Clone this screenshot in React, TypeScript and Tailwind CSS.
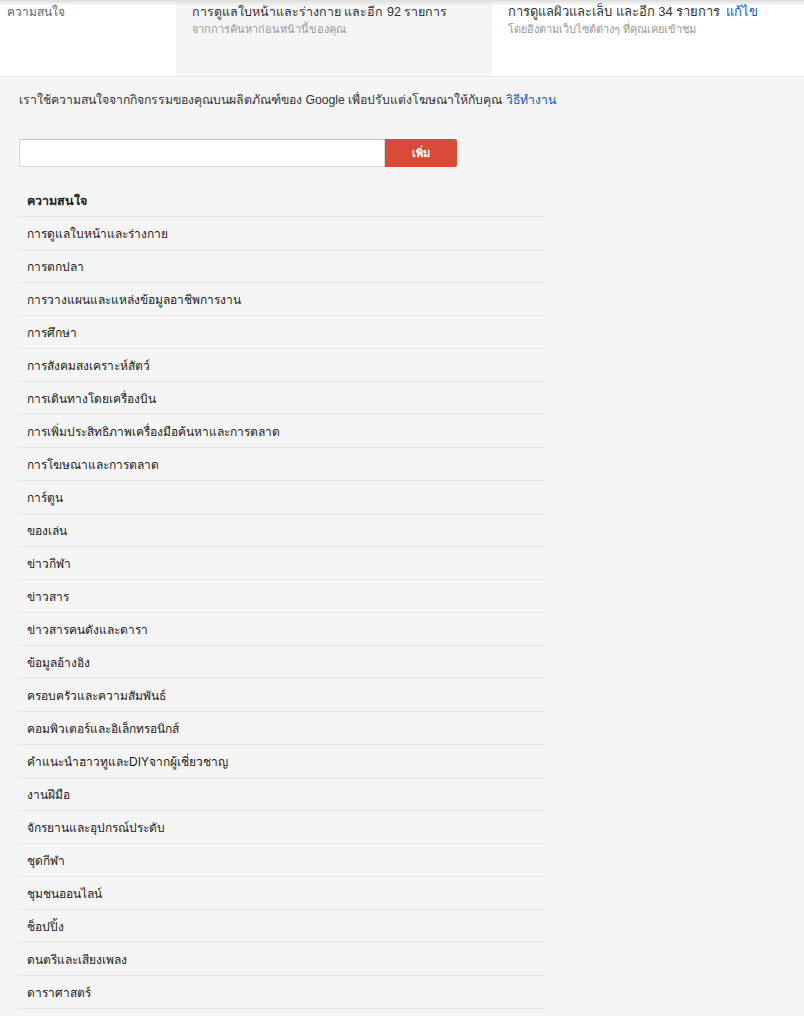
import React from "react";

const interests = [
  "การดูแลใบหน้าและร่างกาย",
  "การตกปลา",
  "การวางแผนและแหล่งข้อมูลอาชีพการงาน",
  "การศึกษา",
  "การสังคมสงเคราะห์สัตว์",
  "การเดินทางโดยเครื่องบิน",
  "การเพิ่มประสิทธิภาพเครื่องมือค้นหาและการตลาด",
  "การโฆษณาและการตลาด",
  "การ์ตูน",
  "ของเล่น",
  "ข่าวกีฬา",
  "ข่าวสาร",
  "ข่าวสารคนดังและดารา",
  "ข้อมูลอ้างอิง",
  "ครอบครัวและความสัมพันธ์",
  "คอมพิวเตอร์และอิเล็กทรอนิกส์",
  "คำแนะนำฮาวทูและDIYจากผู้เชี่ยวชาญ",
  "งานฝีมือ",
  "จักรยานและอุปกรณ์ประดับ",
  "ชุดกีฬา",
  "ชุมชนออนไลน์",
  "ช็อปปิ้ง",
  "ดนตรีและเสียงเพลง",
  "ดาราศาสตร์",
];

export default function App() {
  return (
    <div className="min-h-[1016px] bg-[#f5f5f5] font-['Liberation_Sans',Arial,sans-serif] text-[#222] overflow-hidden">
      {/* top summary cards */}
      <div className="relative flex h-[77px] border-b border-[#e5e5e5]">
        <div className="pointer-events-none absolute inset-x-0 top-0 h-[6px] bg-gradient-to-b from-[#dcdcdc] to-transparent" />
        <div className="w-[176px] bg-white pl-[7px] pt-[4px] text-[12px] leading-[16px] text-[#666]">ความสนใจ</div>
        <div className="w-[316px] pl-[16px] pt-[4px]">
          <div className="text-[12.5px] leading-[16px] text-[#333]">การดูแลใบหน้าและร่างกาย และอีก 92 รายการ</div>
          <div className="mt-[2px] text-[11px] leading-[14px] text-[#999]">จากการค้นหาก่อนหน้านี้ของคุณ</div>
        </div>
        <div className="flex-1 bg-white pl-[16px] pt-[4px]">
          <div className="text-[13px] leading-[16px] text-[#333]">
            การดูแลผิวและเล็บ และอีก 34 รายการ <a className="ml-[2px] text-[#1155cc]">แก้ไข</a>
          </div>
          <div className="mt-[2px] text-[11px] leading-[14px] text-[#999]">โดยอิงตามเว็บไซต์ต่างๆ ที่คุณเคยเข้าชม</div>
        </div>
      </div>

      <div className="px-[19px]">
        <p className="mt-[14px] text-[12.25px] text-[#333]">
          เราใช้ความสนใจจากกิจกรรมของคุณบนผลิตภัณฑ์ของ Google เพื่อปรับแต่งโฆษณาให้กับคุณ{" "}
          <a className="text-[#1155cc]">วิธีทำงาน</a>
        </p>

        <div className="mt-[30px] flex h-[28px]">
          <input className="h-full w-[366px] border border-[#d9d9d9] border-t-[#c0c0c0] bg-white outline-none" />
          <button className="h-full w-[72px] rounded-r-[2px] bg-[#d84a38] text-[11px] font-bold text-white">
            เพิ่ม
          </button>
        </div>

        <div className="mt-[22px] w-[528px]">
          <div className="h-[28px] border-b border-[#e5e5e5] pl-[8px] pt-[3px] text-[12.5px] font-bold text-[#222]">
            ความสนใจ
          </div>
          {interests.map((item) => (
            <div
              key={item}
              className="flex h-[33px] items-center border-b border-[#e5e5e5] pl-[8px] pt-[1px] text-[12px] text-[#222]"
            >
              {item}
            </div>
          ))}
        </div>
      </div>
    </div>
  );
}
